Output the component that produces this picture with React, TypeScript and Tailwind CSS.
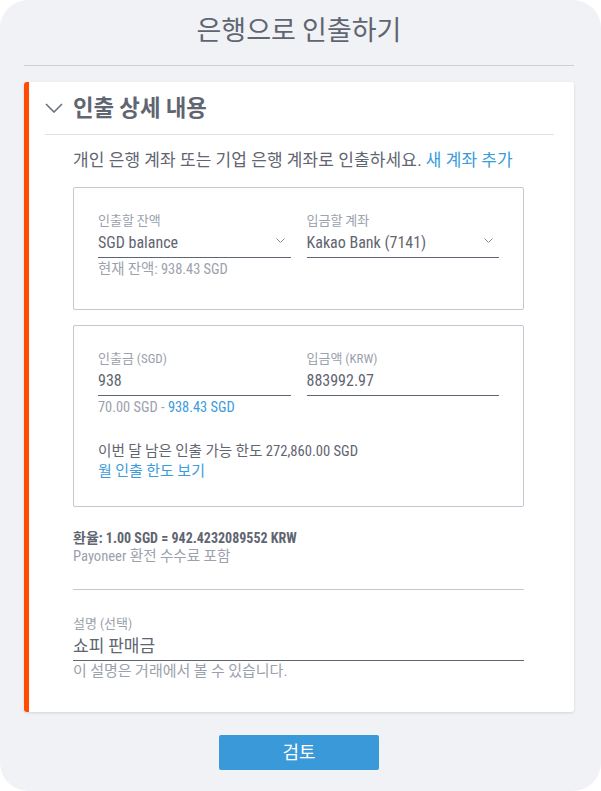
const font = { fontFamily: '"Roboto Condensed", Roboto, "Noto Sans CJK KR", sans-serif' };

type FieldProps = {
  label: string;
  value: string;
  select?: boolean;
  helper?: React.ReactNode;
};

function Caret() {
  return (
    <svg width="9" height="5" viewBox="0 0 9 5" className="mr-[6px] mb-[5px] shrink-0">
      <path d="M0.5 0.5 L4.5 4.5 L8.5 0.5" fill="none" stroke="#8a909c" strokeWidth="1" />
    </svg>
  );
}

function Field({ label, value, select, helper }: FieldProps) {
  return (
    <div className="flex flex-col flex-1 min-w-0">
      <div className="text-[13px] leading-[16px] text-[#9ba1ad]">{label}</div>
      <div className="mt-[4px] flex items-center justify-between border-b border-[#5f6571] pb-[4px]">
        <span className="text-[16px] leading-[20px] text-[#5f6571]">{value}</span>
        {select && <Caret />}
      </div>
      <div className="mt-[3px] text-[14.4px] leading-[18px] text-[#9ba1ad] h-[18px]">{helper}</div>
    </div>
  );
}

export default function App() {
  return (
    <div className="w-[601px] h-[791px] bg-white font-stretch-semi-condensed" style={font}>
      <div className="w-full h-full bg-[#f0f2f6] rounded-[28px] pl-[24px]">
        <div className="w-[550px] flex flex-col items-center">
          <div className="w-full h-[66px] flex items-center justify-center border-b border-[#cdd0d6] pb-[3px]">
            <h1 className="text-[27px] leading-[34px] text-[#5f6571]">은행으로 인출하기</h1>
          </div>

          <div className="mt-[16px] w-full bg-white rounded-[3px] border-l-[5px] border-[#ff4c00] shadow-[0_1px_3px_rgba(0,0,0,0.12)] pl-[16px] pr-[20px] pb-[32px]">
            <div className="h-[53px] flex items-center border-b border-[#dde0e5]">
              <svg width="18" height="10" viewBox="0 0 18 10" className="mr-[10px]">
                <path d="M1 1 L9 9 L17 1" fill="none" stroke="#6b717d" strokeWidth="1.6" />
              </svg>
              <span className="text-[22.4px] leading-[28px] font-bold text-[#5f6571]">인출 상세 내용</span>
            </div>

            <div className="ml-[28px] mr-[30px]">
              <p className="mt-[13px] text-[17px] leading-[24px] tracking-[0.15px] text-[#5f6571] whitespace-nowrap">
                개인 은행 계좌 또는 기업 은행 계좌로 인출하세요. <span className="text-[#3b9bdb]">새 계좌 추가</span>
              </p>

              <div className="mt-[15px] border border-[#c4c8d0] rounded-[2px] pt-[25px] pb-[30px] px-[24px] flex gap-[16px]">
                <Field label="인출할 잔액" value="SGD balance" select helper="현재 잔액: 938.43 SGD" />
                <Field label="입금할 계좌" value="Kakao Bank (7141)" select />
              </div>

              <div className="mt-[15px] border border-[#c4c8d0] rounded-[2px] pt-[25px] pb-[25px] px-[24px]">
                <div className="flex gap-[16px]">
                  <Field
                    label="인출금 (SGD)"
                    value="938"
                    helper={<>70.00 SGD - <span className="text-[#3b9bdb]">938.43 SGD</span></>}
                  />
                  <Field label="입금액 (KRW)" value="883992.97" />
                </div>
                <div className="mt-[24px] text-[14.6px] leading-[20px] text-[#5f6571]">이번 달 남은 인출 가능 한도 272,860.00 SGD</div>
                <div className="text-[15px] leading-[20px] text-[#3b9bdb]">월 인출 한도 보기</div>
              </div>

              <div className="mt-[23px] text-[14px] leading-[17px] font-bold text-[#5f6571]">환율: 1.00 SGD = 942.4232089552 KRW</div>
              <div className="mt-[1px] text-[14.6px] leading-[17px] text-[#9ba1ad]">Payoneer 환전 수수료 포함</div>

              <div className="mt-[24px] border-t border-[#c4c8d0]" />

              <div className="mt-[26px] text-[13px] leading-[16px] text-[#9ba1ad]">설명 (선택)</div>
              <div className="mt-[4px] pb-[4px] border-b border-[#5f6571] text-[17px] leading-[20px] text-[#5f6571]">쇼피 판매금</div>
              <div className="mt-[1px] text-[15px] leading-[18px] text-[#9ba1ad]">이 설명은 거래에서 볼 수 있습니다.</div>
            </div>
          </div>

          <button className="mt-[23px] w-[160px] h-[35px] bg-[#3a9ad9] rounded-[2px] text-white text-[18px] leading-[24px]">검토</button>
        </div>
      </div>
    </div>
  );
}
